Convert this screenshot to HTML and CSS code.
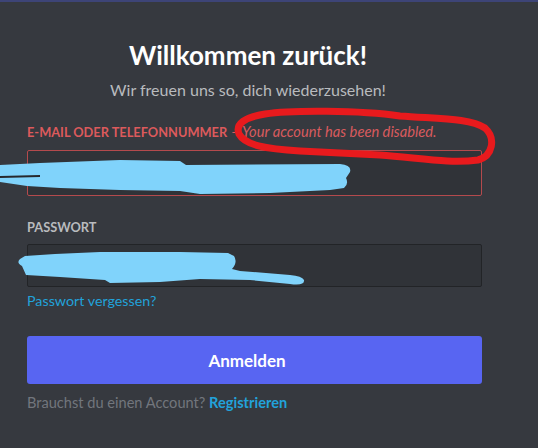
FILE: index.html
```html
<!DOCTYPE html>
<html lang="de">
<head>
<meta charset="utf-8">
<title>Anmelden</title>
<link rel="stylesheet" href="styles.css">
</head>
<body>
<div class="topbar"></div>
<main class="form">
  <header class="head">
    <h1 class="title">Willkommen zurück!</h1>
    <p class="sub">Wir freuen uns so, dich wiederzusehen!</p>
  </header>
  <div class="field">
    <label class="label label-error">E-Mail oder Telefonnummer<span class="err"> – Your account has been disabled.</span></label>
    <div class="input input-error input-tall"></div>
  </div>
  <div class="field field-2">
    <label class="label">Passwort</label>
    <div class="input"></div>
  </div>
  <a class="link forgot">Passwort vergessen?</a>
  <button class="btn">Anmelden</button>
  <p class="foot">Brauchst du einen Account? <a class="link reg">Registrieren</a></p>
</main>
<svg class="annot" viewBox="0 0 538 448" width="538" height="448">
  <path class="blue" d="M0,165 L40,163 L120,160 L180,161 L186,165 L340,164 Q352,165 350,172 L346,178 Q349,184 344,188 L330,190 L270,193 L200,194 L180,191 L120,190 L60,188 L27,186 L0,182 Z"/>
  <path class="dark" d="M0,177 L40,176"/>
  <path class="blue" d="M20,259 Q16,263 22,266 L26,275 L60,277 L105,280 L110,283 L160,282 L200,279 L250,280 L290,284 Q305,286 304,280 Q302,276 290,275 L240,271 L232,269 Q238,262 234,256 L228,253 L180,252 L100,252 L55,254 L25,256 Z"/>
  <path class="red" d="M265,114 C290,110 360,110 400,116 C440,119 470,118 485,128 C496,138 493,156 478,160 C450,164 420,158 380,155 L300,151 C265,149 245,145 239,134 C235,124 245,117 265,114 Z"/>
</svg>
</body>
</html>
```
FILE: styles.css
```css
html, body {
  margin: 0;
  padding: 0;
}
body {
  background: #36393f;
  width: 538px;
  height: 448px;
  overflow: hidden;
  position: relative;
  font-family: Lato, "Noto Sans", "Liberation Sans", sans-serif;
}
.topbar {
  height: 2px;
  background: #3d4477;
}
.form {
  width: 455px;
  margin-left: 27px;
  padding-top: 37px;
  display: flex;
  flex-direction: column;
}
.head {
  text-align: center;
  padding-right: 13px;
}
.title {
  margin: 0;
  font-size: 26px;
  line-height: 32px;
  font-weight: 700;
  color: #ffffff;
}
.sub {
  margin: 8px 0 0;
  font-size: 16px;
  line-height: 22px;
  color: #b9bbbe;
}
.field {
  margin-top: 23px;
  display: flex;
  flex-direction: column;
}
.label {
  display: block;
  height: 16px;
  font-size: 12.8px;
  line-height: 16px;
  font-weight: 700;
  text-transform: uppercase;
  letter-spacing: 0;
  color: #b9bbbe;
  margin-bottom: 10px;
  white-space: nowrap;
}
.label-error {
  color: #dc5a5c;
}
.err {
  font-size: 14.7px;
  line-height: 1;
  font-weight: 400;
  font-style: italic;
  text-transform: none;
  letter-spacing: 0;
  color: #d95b5e;
}
.input {
  height: 43px;
  box-sizing: border-box;
  border: 1px solid #222427;
  border-radius: 2px;
  background: #303338;
}
.input-tall {
  height: 46px;
}
.input-error {
  border-color: #b44a4d;
}
.field-2 .label {
  margin-bottom: 9px;
}
.link {
  color: #22a2da;
  text-decoration: none;
}
.forgot {
  margin-top: 4px;
  font-size: 14.3px;
  line-height: 20px;
  align-self: flex-start;
}
.btn {
  margin-top: 25px;
  height: 48px;
  border: 0;
  border-radius: 3px;
  background: #5865f2;
  color: #ffffff;
  font-family: inherit;
  font-size: 17px;
  font-weight: 700;
  padding: 0 15px 0 0;
}
.foot {
  margin: 9px 0 0;
  font-size: 14.6px;
  line-height: 20px;
  color: #72767d;
}
.reg {
  font-weight: 700;
}
.annot {
  position: absolute;
  top: 0;
  left: 0;
  pointer-events: none;
}
.blue {
  fill: #80d3fb;
}
.dark {
  stroke: #26282c;
  stroke-width: 2;
  fill: none;
}
.red {
  fill: none;
  stroke: #e81a1d;
  stroke-width: 7;
  stroke-linejoin: round;
}
```
